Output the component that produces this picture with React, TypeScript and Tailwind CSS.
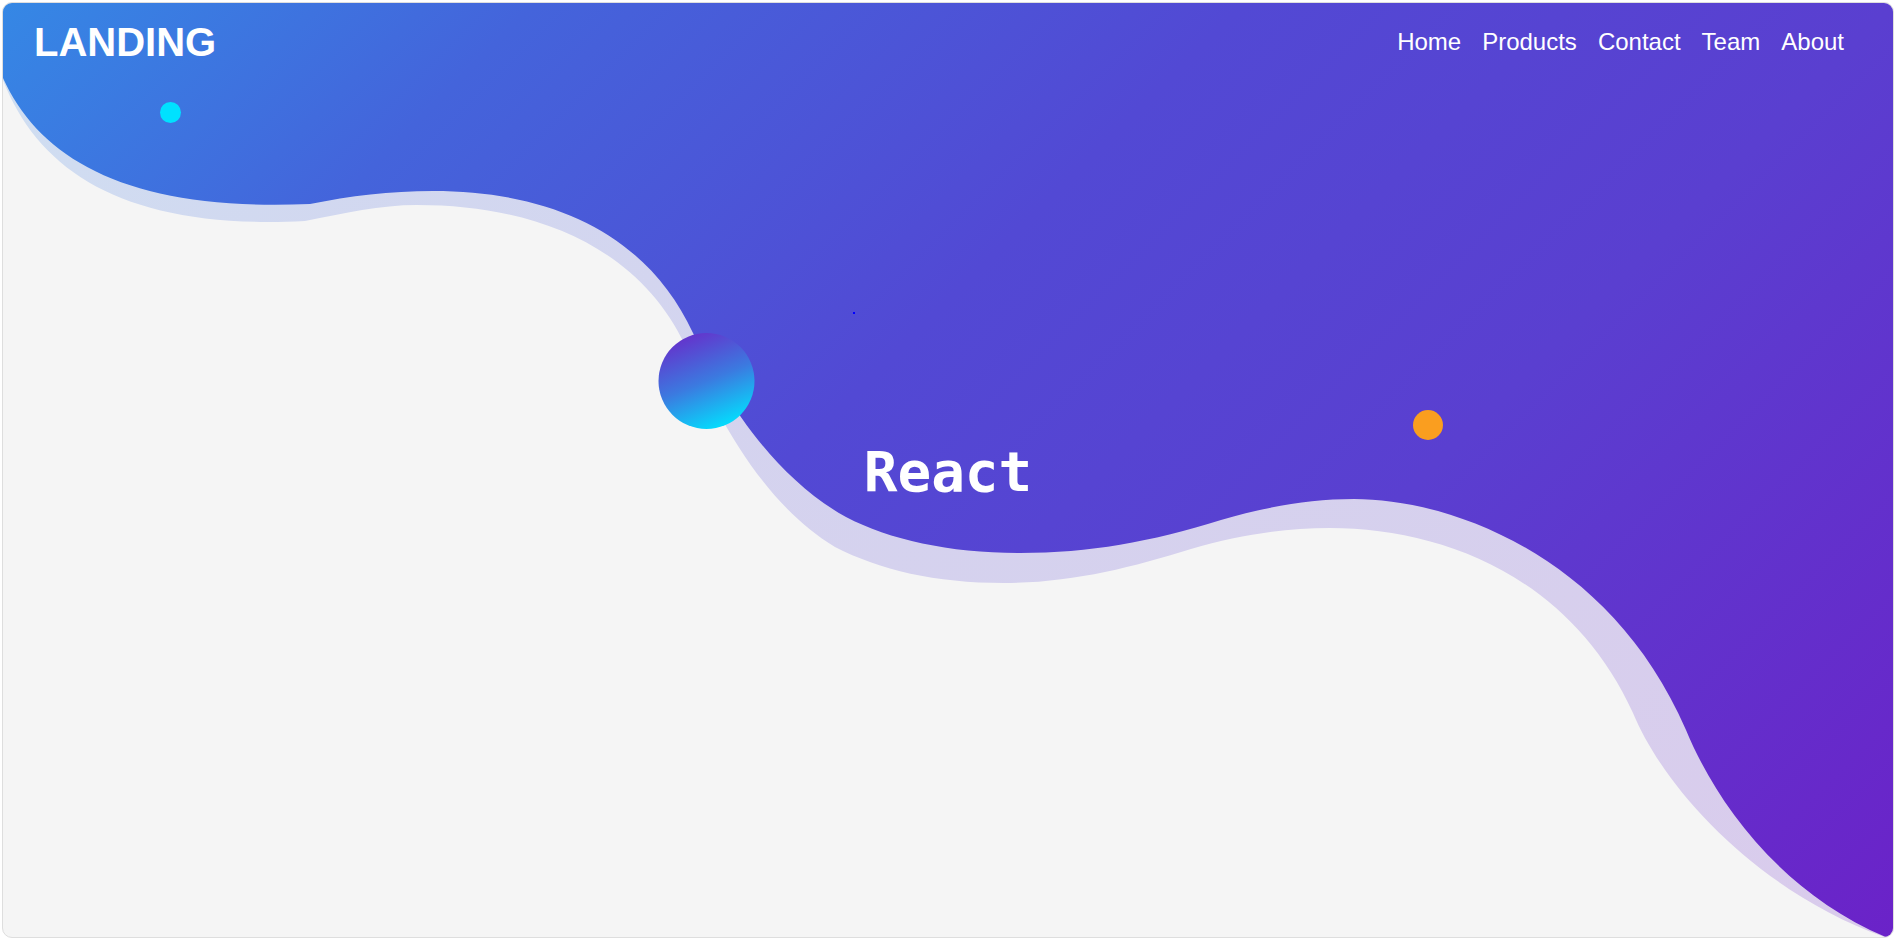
import React from 'react';

const links = ['Home', 'Products', 'Contact', 'Team', 'About'];

// wave outlines, drawn in page coordinates (svg viewBox starts at the container's inner corner)
const mainWave =
  'M -10 -10 L 1900 -10 L 1900 945 L 1893 940 ' +
  'C 1780 895, 1715 800, 1686 730 ' +
  'C 1610 555, 1450 499, 1354 499 ' +
  'C 1310 499, 1270 506, 1221 520 ' +
  'C 1150 542, 1090 553, 1020 553 ' +
  'C 950 553, 890 540, 846 517 ' +
  'C 770 475, 720 391, 693 333 ' +
  'C 650 240, 560 191, 433 191 ' +
  'C 390 191, 350 196, 310 204 ' +
  'C 130 212, 40 160, 3 78 ' +
  'L -10 78 Z';

const shadowWave =
  'M -10 -10 L 1900 -10 L 1900 945 L 1893 940 ' +
  'C 1760 895, 1665 790, 1633 713 ' +
  'C 1570 575, 1440 528, 1330 528 ' +
  'C 1285 528, 1240 535, 1191 549 ' +
  'C 1130 568, 1070 583, 1004 583 ' +
  'C 935 583, 880 570, 835 547 ' +
  'C 757 500, 713 405, 685 345 ' +
  'C 640 250, 540 205, 417 205 ' +
  'C 380 205, 345 213, 305 221 ' +
  'C 130 230, 40 175, 3 80 ' +
  'L -10 80 Z';

function Waves() {
  return (
    <svg
      className="absolute inset-0 w-full h-full"
      viewBox="3 3 1890 934"
      preserveAspectRatio="none"
    >
      <defs>
        <linearGradient id="wave" gradientUnits="userSpaceOnUse" x1="239" y1="-239" x2="1657" y2="1179">
          <stop offset="0%" stopColor="#3588e5" />
          <stop offset="19%" stopColor="#4464db" />
          <stop offset="44%" stopColor="#5249d4" />
          <stop offset="67%" stopColor="#5a3fd0" />
          <stop offset="100%" stopColor="#6b22c8" />
        </linearGradient>
        <linearGradient id="ball" x1="0.3" y1="0" x2="0.7" y2="1">
          <stop offset="0%" stopColor="#6630cb" />
          <stop offset="50%" stopColor="#3b7ae0" />
          <stop offset="100%" stopColor="#00e3ff" />
        </linearGradient>
      </defs>
      <path d={shadowWave} fill="url(#wave)" opacity="0.2" />
      <path d={mainWave} fill="url(#wave)" />
      <circle cx="170.5" cy="112.5" r="10.5" fill="#00e1ff" />
      <circle cx="1428" cy="425" r="15" fill="#fa9e1f" />
      <rect x="853" y="312" width="2" height="2" fill="#0000ff" />
      <circle cx="706.5" cy="381" r="48" fill="url(#ball)" />
    </svg>
  );
}

export default function App() {
  return (
    <div className="m-[2px] h-[936px] rounded-[10px] border border-[#dedede] bg-[#f5f5f5] overflow-hidden relative flex flex-col">
      <Waves />

      <header className="relative h-[78px] shrink-0 flex items-center justify-between pl-[31px] pr-[49px] text-white font-['Liberation_Sans',Arial,sans-serif]">
        <span className="text-[40px] leading-none font-bold">LANDING</span>
        <nav className="flex items-center gap-[21px] text-[24px] leading-none">
          {links.map((l) => (
            <a key={l} href="#" className="text-white">
              {l}
            </a>
          ))}
        </nav>
      </header>

      <main className="relative flex-1 flex items-center justify-center pb-[74px]">
        <h1 className="text-[56px] leading-none font-bold text-white font-['DejaVu_Sans_Mono',monospace]">
          React
        </h1>
      </main>
    </div>
  );
}
